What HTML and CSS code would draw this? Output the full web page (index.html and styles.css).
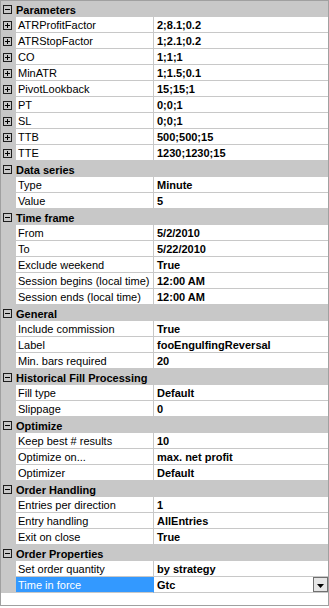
FILE: index.html
```html
<!DOCTYPE html>
<html>
    <head>
        <title>Strategy Properties</title>
        <link rel="stylesheet" href="styles.css">
    </head>
    <body>
        <div id="grid">
            <div class="cat"><span class="box minus"></span><span class="title">Parameters</span></div>
            <div class="row"><span class="gut"><span class="box plus"></span></span><span class="name">ATRProfitFactor</span><span class="val">2;8.1;0.2</span></div>
            <div class="row"><span class="gut"><span class="box plus"></span></span><span class="name">ATRStopFactor</span><span class="val">1;2.1;0.2</span></div>
            <div class="row"><span class="gut"><span class="box plus"></span></span><span class="name">CO</span><span class="val">1;1;1</span></div>
            <div class="row"><span class="gut"><span class="box plus"></span></span><span class="name">MinATR</span><span class="val">1;1.5;0.1</span></div>
            <div class="row"><span class="gut"><span class="box plus"></span></span><span class="name">PivotLookback</span><span class="val">15;15;1</span></div>
            <div class="row"><span class="gut"><span class="box plus"></span></span><span class="name">PT</span><span class="val">0;0;1</span></div>
            <div class="row"><span class="gut"><span class="box plus"></span></span><span class="name">SL</span><span class="val">0;0;1</span></div>
            <div class="row"><span class="gut"><span class="box plus"></span></span><span class="name">TTB</span><span class="val">500;500;15</span></div>
            <div class="row"><span class="gut"><span class="box plus"></span></span><span class="name">TTE</span><span class="val">1230;1230;15</span></div>

            <div class="cat"><span class="box minus"></span><span class="title">Data series</span></div>
            <div class="row"><span class="gut"></span><span class="name">Type</span><span class="val">Minute</span></div>
            <div class="row"><span class="gut"></span><span class="name">Value</span><span class="val">5</span></div>

            <div class="cat"><span class="box minus"></span><span class="title">Time frame</span></div>
            <div class="row"><span class="gut"></span><span class="name">From</span><span class="val">5/2/2010</span></div>
            <div class="row"><span class="gut"></span><span class="name">To</span><span class="val">5/22/2010</span></div>
            <div class="row"><span class="gut"></span><span class="name">Exclude weekend</span><span class="val">True</span></div>
            <div class="row"><span class="gut"></span><span class="name">Session begins (local time)</span><span class="val">12:00 AM</span></div>
            <div class="row"><span class="gut"></span><span class="name">Session ends (local time)</span><span class="val">12:00 AM</span></div>

            <div class="cat"><span class="box minus"></span><span class="title">General</span></div>
            <div class="row"><span class="gut"></span><span class="name">Include commission</span><span class="val">True</span></div>
            <div class="row"><span class="gut"></span><span class="name">Label</span><span class="val">fooEngulfingReversal</span></div>
            <div class="row"><span class="gut"></span><span class="name">Min. bars required</span><span class="val">20</span></div>

            <div class="cat"><span class="box minus"></span><span class="title">Historical Fill Processing</span></div>
            <div class="row"><span class="gut"></span><span class="name">Fill type</span><span class="val">Default</span></div>
            <div class="row"><span class="gut"></span><span class="name">Slippage</span><span class="val">0</span></div>

            <div class="cat"><span class="box minus"></span><span class="title">Optimize</span></div>
            <div class="row"><span class="gut"></span><span class="name">Keep best # results</span><span class="val">10</span></div>
            <div class="row"><span class="gut"></span><span class="name">Optimize on...</span><span class="val">max. net profit</span></div>
            <div class="row"><span class="gut"></span><span class="name">Optimizer</span><span class="val">Default</span></div>

            <div class="cat"><span class="box minus"></span><span class="title">Order Handling</span></div>
            <div class="row"><span class="gut"></span><span class="name">Entries per direction</span><span class="val">1</span></div>
            <div class="row"><span class="gut"></span><span class="name">Entry handling</span><span class="val">AllEntries</span></div>
            <div class="row"><span class="gut"></span><span class="name">Exit on close</span><span class="val">True</span></div>

            <div class="cat"><span class="box minus"></span><span class="title">Order Properties</span></div>
            <div class="row"><span class="gut"></span><span class="name">Set order quantity</span><span class="val">by strategy</span></div>
            <div class="row sel"><span class="gut"></span><span class="name">Time in force</span><span class="val">Gtc<span class="drop"><svg width="7" height="4" viewBox="0 0 7 4"><path d="M0 0h7L3.5 4z" fill="#000"/></svg></span></span></div>
        </div>
    </body>
</html>
```

FILE: styles.css
```css
body {
    margin: 0;
    background-color: white;
    font-family: "Liberation Sans", Arial, sans-serif;
    font-size: 11px;
    color: black;
}
#grid {
    width: 327px;
    height: 604px;
    border: 1px solid #a0a0a0;
    background-color: white;
}
.cat, .row {
    display: flex;
    height: 16px;
}
.cat {
    background-color: #c8c8c8;
    font-weight: bold;
    align-items: center;
}
.cat .box {
    margin: 0 4px 0 2px;
}
.cat .title {
    line-height: 16px;
    padding-top: 1px;
}
.gut {
    width: 15px;
    flex: none;
    background-color: #c8c8c8;
    display: flex;
    align-items: center;
}
.gut .box {
    margin-left: 2px;
}
/* tree expander box, 9x9 with 1px frame */
.box {
    position: relative;
    width: 7px;
    height: 7px;
    border: 1px solid #1e1e1e;
    flex: none;
}
.box::before,
.plus::after {
    content: "";
    position: absolute;
    background-color: #000;
}
.box::before {
    left: 1px;
    top: 3px;
    width: 5px;
    height: 1px;
}
.plus::after {
    left: 3px;
    top: 1px;
    width: 1px;
    height: 5px;
}
.name, .val {
    box-sizing: border-box;
    height: 16px;
    line-height: 15px;
    padding-top: 1px;
    border-bottom: 1px solid #c8c8c8;
    white-space: nowrap;
}
.name {
    width: 138px;
    flex: none;
    padding-left: 2px;
    border-right: 1px solid #c8c8c8;
    overflow: hidden;
}
.val {
    flex: 1;
    padding-left: 3px;
    font-weight: bold;
    display: flex;
    justify-content: space-between;
}
.sel .name {
    background-color: #3399ff;
    border-right-color: #3399ff;
    color: white;
}
.drop {
    width: 13px;
    height: 13px;
    margin-top: -1px;
    border: 1px solid #707070;
    background-color: #e6e6e6;
    display: flex;
    align-items: flex-end;
    justify-content: center;
}
.drop svg {
    margin-bottom: 3px;
}
```
